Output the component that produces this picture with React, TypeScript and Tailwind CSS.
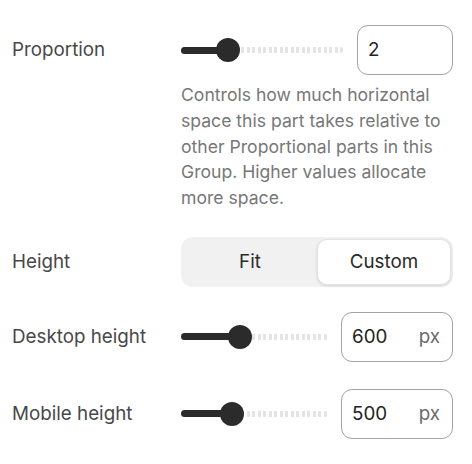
import React from 'react';

const font = { fontFamily: 'Inter, "Noto Sans", sans-serif' };

const Slider: React.FC<{ pct: number }> = ({ pct }) => (
  <div className="relative h-[50px] flex-1">
    <div
      className="absolute top-[22px] left-0 right-0 h-[6px] rounded-full bg-[repeating-linear-gradient(90deg,#e4e4e4_0px,#e4e4e4_3px,transparent_3px,transparent_5.5px)]"
    />
    <div className="absolute top-[21.5px] left-0 h-[7px] rounded-full bg-[#2b2b2b]" style={{ width: `${pct}%` }} />
    <div
      className="absolute top-[13px] h-[24px] w-[24px] -translate-x-1/2 rounded-full bg-[#2b2b2b]"
      style={{ left: `${pct}%` }}
    />
  </div>
);

const Label: React.FC<{ children: React.ReactNode }> = ({ children }) => (
  <div className="text-[18.8px] leading-[50px] text-[#484848]">{children}</div>
);

const NumberBox: React.FC<{ value: string; unit?: string; w: string }> = ({ value, unit, w }) => (
  <div
    className={`flex h-[50px] ${w} items-center justify-between rounded-[11px] border border-[#a3a3a3] bg-white pl-[10px] pr-[12px] text-[18.8px] text-[#222]`}
  >
    <span>{value}</span>
    {unit && <span className="text-[#6a6a6a]">{unit}</span>}
  </div>
);

export default function App() {
  return (
    <div className="min-h-screen bg-white pt-[25px] pl-3 pr-[19px]" style={font}>
      <div className="grid grid-cols-[169px_1fr]">
        <Label>Proportion</Label>
        <div>
          <div className="flex gap-[14px]">
            <Slider pct={29} />
            <NumberBox value="2" w="w-[96px]" />
          </div>
          <p className="mt-[7px] text-[17.6px] leading-[25.8px] text-[#777]">
            Controls how much horizontal space this part takes relative to other Proportional parts in this
            Group. Higher values allocate more space.
          </p>
        </div>
      </div>

      <div className="mt-[26px] grid grid-cols-[169px_1fr]">
        <Label>Height</Label>
        <div className="grid h-[50px] grid-cols-2 rounded-[12px] bg-[#f1f1f1] p-[2px] text-[18.8px] text-[#2a2a2a]">
          <button className="rounded-[10px]">Fit</button>
          <button className="rounded-[10px] border border-[#e2e2e2] bg-white shadow-[0_1px_3px_rgba(0,0,0,0.12)]">
            Custom
          </button>
        </div>
      </div>

      <div className="mt-[25px] grid grid-cols-[169px_1fr]">
        <Label>Desktop height</Label>
        <div className="flex gap-[13px]">
          <Slider pct={40} />
          <NumberBox value="600" unit="px" w="w-[112px]" />
        </div>
      </div>

      <div className="mt-[27px] grid grid-cols-[169px_1fr]">
        <Label>Mobile height</Label>
        <div className="flex gap-[13px]">
          <Slider pct={34.7} />
          <NumberBox value="500" unit="px" w="w-[112px]" />
        </div>
      </div>
    </div>
  );
}
